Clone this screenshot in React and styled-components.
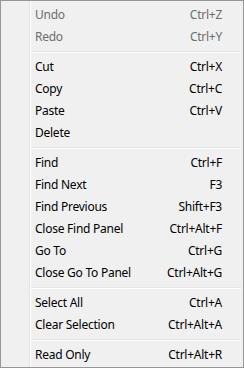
import React from 'react';
import styled, { createGlobalStyle } from 'styled-components';

const GlobalStyle = createGlobalStyle`
  html, body {
    margin: 0;
    padding: 0;
    background: #f0f0f0;
  }
  * {
    box-sizing: border-box;
  }
`;

const Menu = styled.ul`
  list-style: none;
  margin: 0;
  width: 244px;
  height: 368px;
  padding: 2px;
  border: 1px solid #979797;
  background: linear-gradient(
    to right,
    #f0f0f0 0,
    #f0f0f0 26px,
    #e2e3e3 26px,
    #e2e3e3 27px,
    #ffffff 27px,
    #ffffff 28px,
    #f0f0f0 28px
  );
  background-origin: content-box;
  background-clip: padding-box;
  font-family: 'Noto Sans', 'Open Sans', sans-serif;
  font-size: 12px;
  letter-spacing: -0.25px;
  color: #000;
  user-select: none;
`;

const Item = styled.li`
  height: 22px;
  display: flex;
  align-items: center;
  justify-content: space-between;
  padding: 0 19px 0 32px;
  color: ${(p) => (p.$disabled ? '#6d6d6d' : '#000')};
  cursor: default;
  white-space: nowrap;
`;

const Label = styled.span``;

const Shortcut = styled.span`
  text-align: right;
`;

const Separator = styled.li`
  height: 8px;
  margin-left: 28px;
  display: flex;
  flex-direction: column;
  padding-top: 4px;
  &::before {
    content: '';
    height: 1px;
    background: #e2e3e3;
  }
  &::after {
    content: '';
    height: 1px;
    background: #ffffff;
  }
`;

const groups = [
  [
    { label: 'Undo', keys: 'Ctrl+Z', disabled: true },
    { label: 'Redo', keys: 'Ctrl+Y', disabled: true },
  ],
  [
    { label: 'Cut', keys: 'Ctrl+X' },
    { label: 'Copy', keys: 'Ctrl+C' },
    { label: 'Paste', keys: 'Ctrl+V' },
    { label: 'Delete', keys: '' },
  ],
  [
    { label: 'Find', keys: 'Ctrl+F' },
    { label: 'Find Next', keys: 'F3' },
    { label: 'Find Previous', keys: 'Shift+F3' },
    { label: 'Close Find Panel', keys: 'Ctrl+Alt+F' },
    { label: 'Go To', keys: 'Ctrl+G' },
    { label: 'Close Go To Panel', keys: 'Ctrl+Alt+G' },
  ],
  [
    { label: 'Select All', keys: 'Ctrl+A' },
    { label: 'Clear Selection', keys: 'Ctrl+Alt+A' },
  ],
  [{ label: 'Read Only', keys: 'Ctrl+Alt+R' }],
];

const App = () => {
  return (
    <>
      <GlobalStyle />
      <Menu>
        {groups.map((group, gi) => (
          <React.Fragment key={gi}>
            {gi > 0 && <Separator />}
            {group.map((it) => (
              <Item key={it.label} $disabled={it.disabled}>
                <Label>{it.label}</Label>
                <Shortcut>{it.keys}</Shortcut>
              </Item>
            ))}
          </React.Fragment>
        ))}
      </Menu>
    </>
  );
};

export default App;
